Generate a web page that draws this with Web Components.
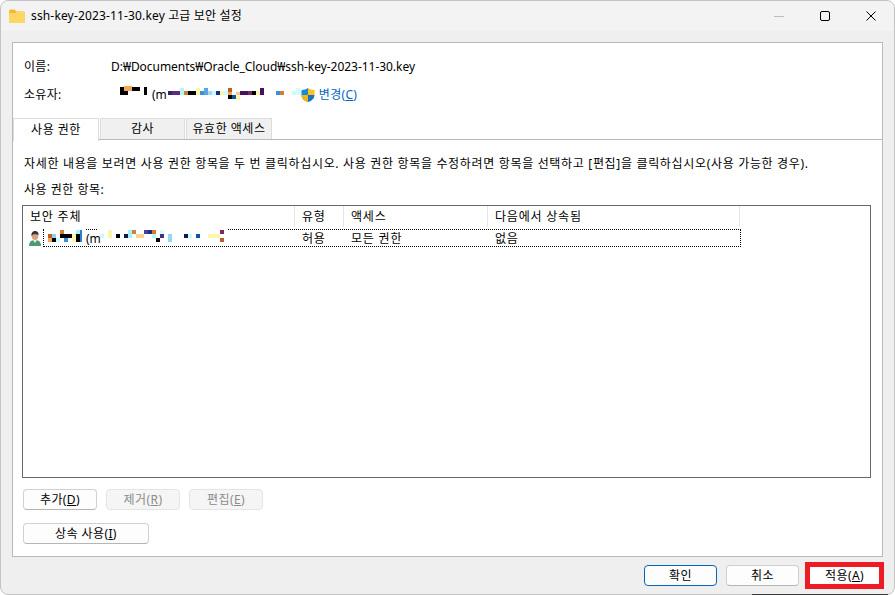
<!DOCTYPE html>
<html lang="ko">
<head>
<meta charset="utf-8">
<title>고급 보안 설정</title>
<style>
  html, body { margin: 0; padding: 0; background: #fff; }
  body { font: 12px/16px "Noto Sans", "Noto Sans CJK KR", sans-serif; color: #000; overflow: hidden; }
</style>
</head>
<body>
<security-dialog caption="ssh-key-2023-11-30.key 고급 보안 설정">
  <info-row label="이름:"><span style="letter-spacing:-.04px">D:₩Documents₩Oracle_Cloud₩ssh-key-2023-11-30.key</span></info-row>
  <info-row label="소유자:" class="owner">
    <pixel-mask style="margin-left:1px;margin-top:-6px" width="40" height="16" data="8,3,8,8,#000;12,2,8,5,#f4a65a;20,3,8,4,#000;32,3,3,8,#000"></pixel-mask>
    <span>(m</span>
    <pixel-mask style="margin-left:1px;margin-top:-6px" width="133" height="16" data="0,7,4,4,#3a1f6b;4,7,8,4,#5b2d7a;12,4,4,7,#b5f5f5;16,7,4,4,#c9802f;20,7,8,4,#000;28,4,4,7,#fdf6a8;32,7,4,4,#3e8ed8;36,4,4,7,#5aa5e8;40,7,4,4,#a8d8f5;44,7,4,4,#c8fbfb;48,7,4,4,#12357f;52,7,4,4,#fdf6a8;56,7,4,4,#c8fbfb;60,4,4,4,#b5651d;60,8,4,3,#f4a65a;60,11,4,4,#000;64,11,4,4,#12559f;68,8,4,3,#f9c98a;68,12,4,4,#fdf6a8;72,7,8,4,#4a1060;80,7,4,4,#7a2a60;84,7,4,4,#000;88,7,4,4,#fdf6a8;92,4,4,7,#4a1060;108,7,4,4,#3e8ed8;112,7,4,4,#d08030;124,7,4,4,#c8fbfb;128,4,4,7,#d8fbfb;132,7,1,4,#c8fbfb"></pixel-mask>
    <change-link></change-link>
  </info-row>

  <tab-strip>
    <tab-item active style="--w:86px">사용 권한</tab-item>
    <tab-item style="--w:85px">감사</tab-item>
    <tab-item style="--w:86px">유효한 액세스</tab-item>
  </tab-strip>

  <permission-page>
    <span slot="hint">자세한 내용을 보려면 사용 권한 항목을 두 번 클릭하십시오. 사용 권한 항목을 수정하려면 항목을 선택하고 [편집]을 클릭하십시오(사용 가능한 경우).</span>
    <span slot="title">사용 권한 항목:</span>
    <acl-table slot="table"></acl-table>
    <win-button slot="actions" style="--w:74px">추가(<u>D</u>)</win-button>
    <win-button slot="actions" disabled style="--w:74px">제거(<u>R</u>)</win-button>
    <win-button slot="actions" disabled style="--w:74px">편집(<u>E</u>)</win-button>
    <win-button slot="inherit" style="--w:126px">상속 사용(<u>I</u>)</win-button>
  </permission-page>

  <win-button slot="footer" primary style="--w:73px">확인</win-button>
  <win-button slot="footer" style="--w:73px">취소</win-button>
  <win-button slot="footer" marked style="--w:69px">적용(<u>A</u>)</win-button>
</security-dialog>

<script>
class PixelMask extends HTMLElement {
  connectedCallback() {
    const w = this.getAttribute('width');
    const h = this.getAttribute('height');
    const rects = (this.getAttribute('data') || '').split(';').filter(Boolean).map(r => {
      const [x, y, rw, rh, c] = r.split(',');
      return `<rect x="${x}" y="${y}" width="${rw}" height="${rh}" fill="${c}"/>`;
    }).join('');
    this.attachShadow({ mode: 'open' }).innerHTML = `
      <style>
        :host { display: block; flex: none; width: ${w}px; height: ${h}px; }
        svg { display: block; }
      </style>
      <svg width="${w}" height="${h}" shape-rendering="crispEdges">${rects}</svg>`;
  }
}

class InfoRow extends HTMLElement {
  connectedCallback() {
    this.attachShadow({ mode: 'open' }).innerHTML = `
      <style>
        :host { display: flex; align-items: center; height: 16px; margin-bottom: 12px; }
        .label { width: 87px; flex: none; letter-spacing: .3px; }
        .value { display: flex; align-items: center; }
      </style>
      <span class="label">${this.getAttribute('label')}</span>
      <span class="value"><slot></slot></span>`;
  }
}

class ChangeLink extends HTMLElement {
  connectedCallback() {
    this.attachShadow({ mode: 'open' }).innerHTML = `
      <style>
        :host { display: flex; align-items: center; gap: 4px; color: #0067c0; letter-spacing: .3px; }
        svg { display: block; }
      </style>
      <svg width="14" height="16" viewBox="0 0 14 16">
        <path d="M7 1C5.400 2.300 3 3 .5 3v5c0 3.400 2.600 5.800 6.500 7z" fill="#1e88d8"/>
        <path d="M7 1c1.600 1.300 4 2 6.500 2v5H7z" fill="#fdc21f"/>
        <path d="M.5 8H7v7C3.100 13.800.5 11.400.5 8z" fill="#f8b512"/>
        <path d="M7 8h6.500c0 3.400-2.600 5.800-6.500 7z" fill="#1873c4"/>
      </svg>
      <span>변경(<u>C</u>)</span>`;
  }
}

class TabItem extends HTMLElement {
  connectedCallback() {
    this.attachShadow({ mode: 'open' }).innerHTML = `
      <style>
        :host {
          display: flex; align-items: center; justify-content: center; box-sizing: border-box;
          width: var(--w); height: 21px; margin-right: 1px;
          background: #f0f0f0; border: 1px solid #dcdcdc; border-bottom: 0; letter-spacing: .5px;
        }
        :host([active]) { background: #fff; height: 23px; margin-bottom: -2px; position: relative; z-index: 1; }
      </style>
      <slot></slot>`;
  }
}

class TabStrip extends HTMLElement {
  connectedCallback() {
    this.attachShadow({ mode: 'open' }).innerHTML = `
      <style>
        :host { display: flex; height: 21px; margin: 15px -11px 0 -11px; border-bottom: 1px solid #b9b9b9; }
      </style>
      <slot></slot>`;
  }
}

class WinButton extends HTMLElement {
  connectedCallback() {
    this.attachShadow({ mode: 'open' }).innerHTML = `
      <style>
        :host {
          display: flex; align-items: center; justify-content: center; box-sizing: border-box;
          width: var(--w); height: 21px; background: #fdfdfd; border: 1px solid #d0d0d0;
          border-bottom-color: #b5b5b5; border-radius: 4px; flex: none; letter-spacing: .4px;
        }
        :host([disabled]) { background: #f5f5f5; border-color: #e4e4e4; color: #8b8b8b; }
        :host([primary]) { border: 1px solid #0067c0; }
        :host([marked]) { width: 79px; height: 27px; border: 5px solid #ed1c24; border-radius: 0; background: #fff; margin: -3px 0 0 -3px; }
      </style>
      <slot></slot>`;
  }
}

class AclTable extends HTMLElement {
  connectedCallback() {
    const mosaic = '5,6,4,4,#b5651d;9,6,4,4,#8fd0f5;17,2,4,4,#d08030;17,6,12,4,#000;9,10,4,4,#000;5,10,4,4,#f4a65a;13,10,4,4,#c8fbfb;21,10,4,4,#3e8ed8;29,6,4,8,#fdf6a8;33,6,4,8,#000;33,2,4,4,#a8f0f5;37,2,2,12,#2e7fd0;' +
      '57,6,4,4,#c8fbfb;65,2,4,8,#fdf6a8;73,6,4,4,#000;81,6,4,4,#0c1a50;85,2,4,8,#a8f0f5;89,2,4,4,#c9804a;93,6,8,4,#fbd48a;101,2,4,4,#4a3f9f;105,2,4,4,#1a2f80;109,2,4,4,#d08030;109,6,4,4,#b5f5f5;113,10,4,4,#000;117,6,4,4,#4a2a8a;117,2,4,4,#d8fbfb;125,6,4,8,#90d8f8;141,6,4,4,#0c1a50;145,6,4,4,#c8fbfb;153,6,4,4,#0a55a8;165,6,12,4,#fdf6a8;177,2,4,4,#7a2a60;177,10,4,4,#b5602d';
    const rects = mosaic.split(';').map(r => {
      const [x, y, w, h, c] = r.split(',');
      return `<rect x="${x}" y="${y}" width="${w}" height="${h}" fill="${c}"/>`;
    }).join('');
    this.attachShadow({ mode: 'open' }).innerHTML = `
      <style>
        :host { display: block; box-sizing: border-box; width: 849px; height: 273px; margin-left: -2px; border: 1px solid #696969; background: #fff; }
        .head, .row { display: grid; grid-template-columns: 272px 49px 144px 252px; }
        .head { height: 20px; }
        .head span { padding-left: 7px; border-right: 1px solid #e5e5e5; line-height: 21px; letter-spacing: .8px; }
        .row { position: relative; margin-top: 3px; height: 18px; line-height: 19px; width: 718px; }
        .row > span { padding-left: 7px; letter-spacing: .8px; }
        .who { display: flex; align-items: center; padding-left: 5px !important; }
        .who svg { display: block; flex: none; }
        .who .m { margin-left: 44px; letter-spacing: 0; }
        .focus {
          position: absolute; left: 20px; right: 0; top: 0; bottom: 0;
          border: 1px dotted #000; pointer-events: none;
        }
        .mask { position: absolute; left: 20px; top: -1px; }
      </style>
      <div class="head"><span>보안 주체</span><span>유형</span><span>액세스</span><span>다음에서 상속됨</span></div>
      <div class="row">
        <span class="who">
          <svg width="14" height="17" viewBox="0 0 14 17">
            <path d="M1 16c0-4 2-6 6-6s6 2 6 6z" fill="#4f9a72"/>
            <path d="M5 10l2 3 2-3z" fill="#e8f2ea"/>
            <ellipse cx="7" cy="6" rx="3.300" ry="4" fill="#d9a47f"/>
            <path d="M3.500 6C3 2.500 5 1 7 1s4 1.500 3.500 4C9.500 4 6 4 5 4.500 4.500 5 4 5.500 3.500 6z" fill="#3b3432"/>
          </svg>
          <span class="m">(m</span>
        </span>
        <span>허용</span><span>모든 권한</span><span>없음</span>
        <div class="focus"></div>
        <svg class="mask" width="190" height="18" shape-rendering="crispEdges">
          <rect x="1" y="0" width="42" height="2" fill="#fff"/>
          <rect x="55" y="0" width="130" height="2" fill="#fff"/>
          ${rects}
        </svg>
      </div>`;
  }
}

class PermissionPage extends HTMLElement {
  connectedCallback() {
    this.attachShadow({ mode: 'open' }).innerHTML = `
      <style>
        :host { display: block; }
        .hint { height: 16px; margin-top: 16px; white-space: nowrap; letter-spacing: .67px; }
        .title { height: 16px; margin-top: 10px; margin-bottom: 7px; letter-spacing: .5px; }
        .actions { display: flex; gap: 9px; margin-top: 11px; margin-left: -1px; }
        .inherit { display: flex; margin-top: 13px; margin-left: -1px; }
      </style>
      <div class="hint"><slot name="hint"></slot></div>
      <div class="title"><slot name="title"></slot></div>
      <slot name="table"></slot>
      <div class="actions"><slot name="actions"></slot></div>
      <div class="inherit"><slot name="inherit"></slot></div>`;
  }
}

class SecurityDialog extends HTMLElement {
  connectedCallback() {
    this.attachShadow({ mode: 'open' }).innerHTML = `
      <style>
        :host {
          display: block; box-sizing: border-box; position: relative; width: 895px; height: 595px;
          background: #efefef; border: 1px solid #c4c4c4; border-radius: 8px;
        }
        .bar { display: flex; align-items: center; height: 30px; background: #f3f3f3; border-radius: 8px 8px 0 0; padding-left: 8px; }
        .bar .cap { margin-left: 6px; letter-spacing: .15px; flex: 1; }
        .folder { display: block; flex: none; }
        .btn { display: flex; align-items: center; justify-content: center; width: 46px; height: 30px; }
        .btn svg { display: block; }
        .panel {
          box-sizing: border-box; width: 871px; height: 515px; margin: 11px 0 0 11px;
          background: #fff; border: 1px solid #b9b9b9; padding: 16px 11px 0 11px;
        }
        .foot { display: flex; justify-content: flex-end; align-items: flex-start; gap: 9px; padding: 8px 10px 0 0; }
        .edge { position: absolute; right: 6px; bottom: -1px; width: 136px; height: 1px; background: #3a3a3a; }
      </style>
      <div class="bar">
        <svg class="folder" width="16" height="14" viewBox="0 0 16 14">
          <path d="M0 2a1.500 1.500 0 0 1 1.500-1.500h4L7.500 2.500H14.500A1.500 1.500 0 0 1 16 4v8.500A1.500 1.500 0 0 1 14.500 14h-13A1.500 1.500 0 0 1 0 12.500z" fill="#f5b836"/>
          <path d="M0 5a1 1 0 0 1 1-1h5.500L8 3h6.500A1.500 1.500 0 0 1 16 4.500v8A1.500 1.500 0 0 1 14.500 14h-13A1.500 1.500 0 0 1 0 12.500z" fill="#fdd663"/>
        </svg>
        <span class="cap">${this.getAttribute('caption')}</span>
        <span class="btn"><svg width="10" height="10"><path d="M0 5.500h10" stroke="#bdbdbd" fill="none"/></svg></span>
        <span class="btn"><svg width="10" height="10"><rect x=".5" y=".5" width="9" height="9" rx="1.500" stroke="#000" fill="none"/></svg></span>
        <span class="btn"><svg width="10" height="10"><path d="M.5.500l9 9M9.500.500l-9 9" stroke="#000" fill="none"/></svg></span>
      </div>
      <div class="panel"><slot></slot></div>
      <div class="foot"><slot name="footer"></slot></div>
      <div class="edge"></div>`;
  }
}

customElements.define('pixel-mask', PixelMask);
customElements.define('info-row', InfoRow);
customElements.define('change-link', ChangeLink);
customElements.define('tab-item', TabItem);
customElements.define('tab-strip', TabStrip);
customElements.define('win-button', WinButton);
customElements.define('acl-table', AclTable);
customElements.define('permission-page', PermissionPage);
customElements.define('security-dialog', SecurityDialog);
</script>
</body>
</html>
